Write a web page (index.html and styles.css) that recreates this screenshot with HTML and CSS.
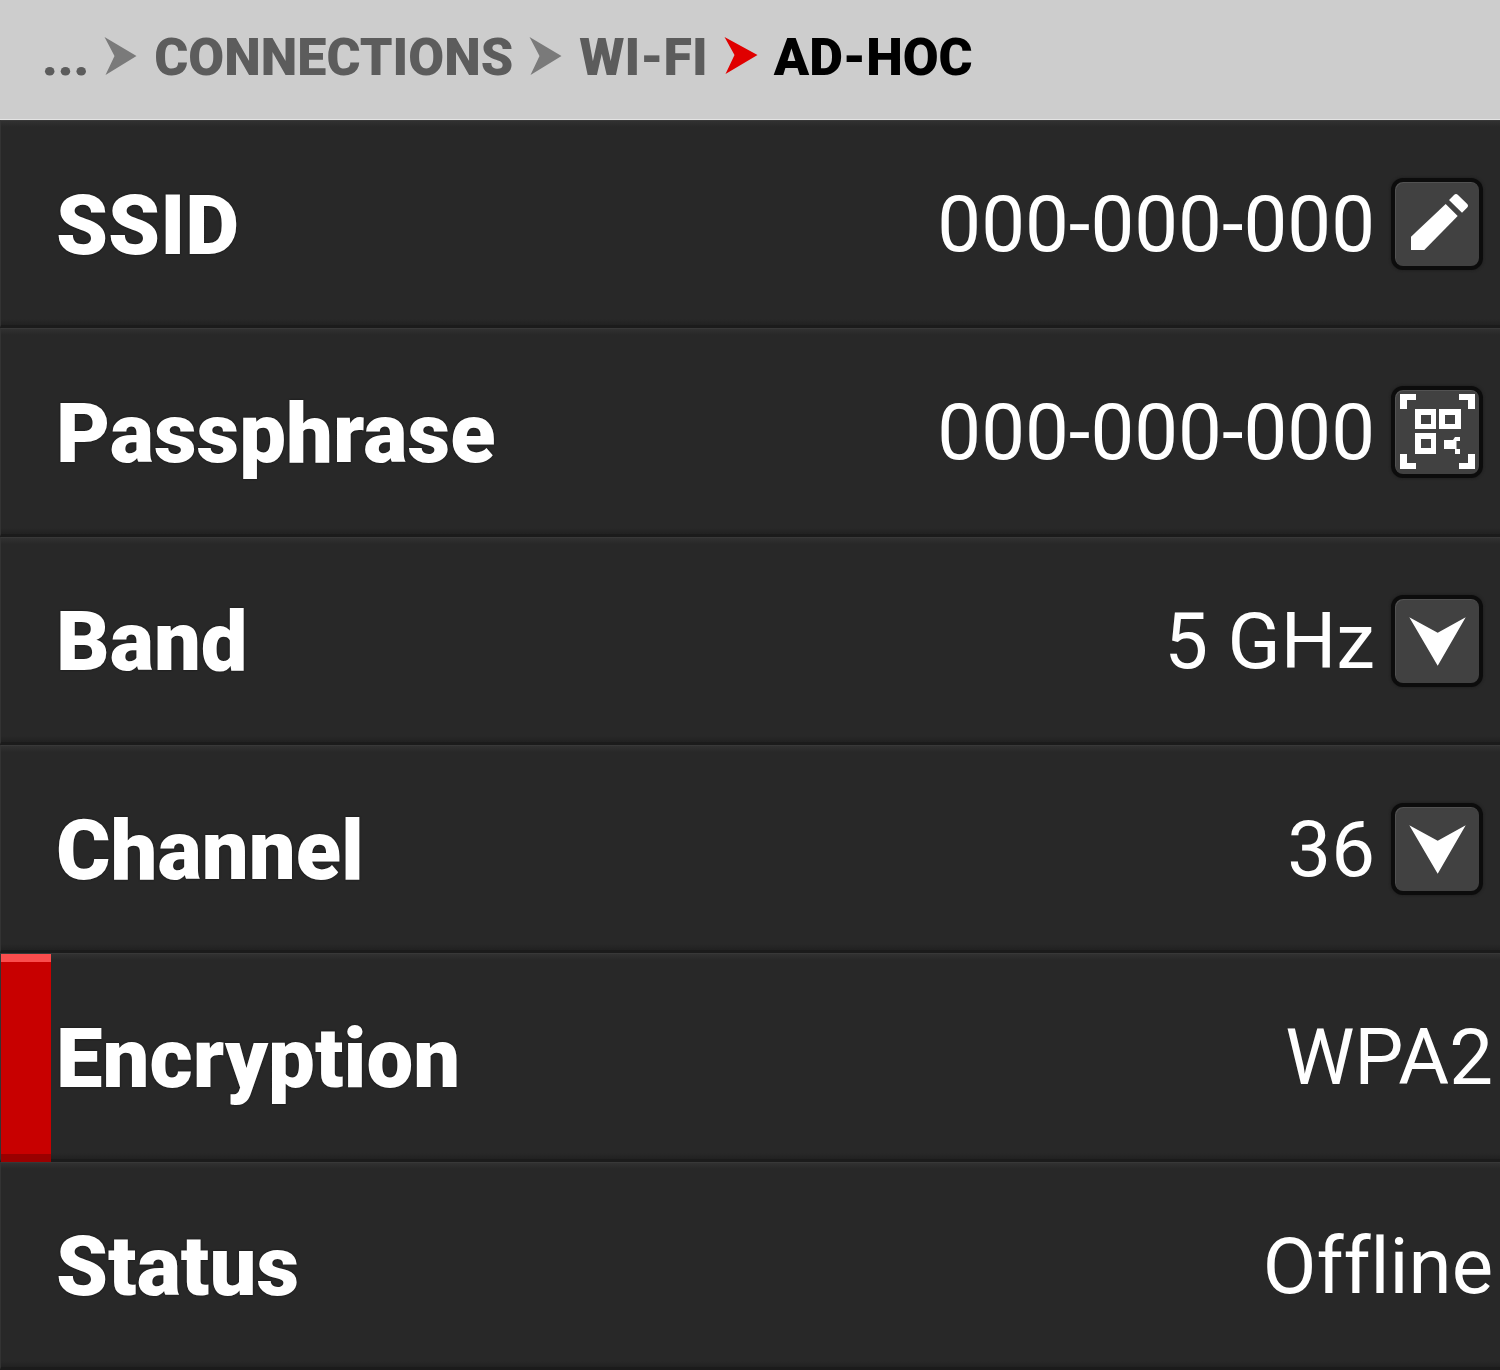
FILE: index.html
```html
<!DOCTYPE html>
<html lang="en">
<head>
<meta charset="utf-8">
<title>Ad-Hoc</title>
<link rel="stylesheet" href="styles.css">
</head>
<body>
<div class="app">
  <nav class="crumbs">
    <span class="crumb">...</span>
    <svg class="sep" viewBox="0 0 32 38"><path class="sep-gray" d="M0 0L32 19L1 38L10 19Z"/></svg>
    <span class="crumb">CONNECTIONS</span>
    <svg class="sep" viewBox="0 0 32 38"><path class="sep-gray" d="M0 0L32 19L1 38L10 19Z"/></svg>
    <span class="crumb">WI-FI</span>
    <svg class="sep" viewBox="0 0 32 38"><path class="sep-red" d="M0 0L33 18L1 37L10 18Z"/></svg>
    <span class="crumb current">AD-HOC</span>
  </nav>
  <main class="list">
    <div class="row">
      <span class="label">SSID</span>
      <span class="value">000-000-000</span>
      <button class="btn"><svg class="icon" viewBox="0 0 92 92"><path d="M20 72V58.7L54.7 26L66.7 38L33.3 72Z"/><path d="M58 22L63 17Q65 15 67 17L76 25.700Q78 27.700 76 29.700L71 34.700Z"/></svg></button>
    </div>
    <div class="row">
      <span class="label">Passphrase</span>
      <span class="value">000-000-000</span>
      <button class="btn"><svg class="icon" viewBox="0 0 92 92"><path d="M9 8H25V14H16V23H9ZM84 8H68V14H77V23H84ZM9 83H25V77H16V68H9ZM84 83H68V77H77V68H84Z"/><path fill-rule="evenodd" d="M24 23H45V43H24ZM30 29V38H40V29ZM48 23H70V43H48ZM54 29V38H64V29ZM24 47H45V68H24ZM30 53V62H40V53Z"/><path d="M53 54H62L64 51H69V55H65.500V63H69V68H64V63H53Z"/></svg></button>
    </div>
    <div class="row">
      <span class="label">Band</span>
      <span class="value">5 GHz</span>
      <button class="btn"><svg class="icon" viewBox="0 0 92 92"><path d="M18.300 22.300L46.700 37.700L74.700 22.300L46.700 70.700Z"/></svg></button>
    </div>
    <div class="row">
      <span class="label">Channel</span>
      <span class="value">36</span>
      <button class="btn"><svg class="icon" viewBox="0 0 92 92"><path d="M18.300 22.300L46.700 37.700L74.700 22.300L46.700 70.700Z"/></svg></button>
    </div>
    <div class="row selected">
      <span class="marker"></span>
      <span class="label">Encryption</span>
      <span class="value">WPA2</span>
    </div>
    <div class="row">
      <span class="label">Status</span>
      <span class="value">Offline</span>
    </div>
  </main>
</div>
</body>
</html>
```
FILE: styles.css
```css
* { box-sizing: border-box; }
html, body { margin: 0; padding: 0; background: #282828; }
.app { width: 1500px; height: 1370px; display: flex; flex-direction: column; font-family: Roboto, sans-serif; font-variant-ligatures: none; overflow: hidden; }
.crumbs { height: 120px; flex: none; background: #cdcdcd; border-bottom: 1px solid #e4e4e4; display: flex; align-items: center; padding: 0 0 4px 42px; }
.crumb { font-size: 52px; line-height: 1; font-weight: 900; color: #5c5c5c; }
.crumb:first-child { margin-right: -1px; }
.crumb.current { color: #000; }
.sep { width: 33px; height: 38px; flex: none; margin: 0 17px 3px 16px; overflow: visible; }
.sep-gray { fill: #7a7a7a; }
.sep-red { fill: #e00000; }
.list { flex: 1; display: flex; flex-direction: column; }
.row { position: relative; flex: 1; display: flex; align-items: center; padding: 2px 7px 0 58px; background: linear-gradient(#313131, #282828 6px, #282828 calc(100% - 6px), #212121); border-top: 1px solid #383838; border-bottom: 3px solid #1b1b1b; border-left: 1px solid #333; }
.label { font-size: 83.2px; font-weight: 900; color: #fff; flex: 1; line-height: 1; text-shadow: 0 0 2px #111; margin: 2px 0 0 -3px; }
.value { font-size: 78px; font-weight: 400; color: #fff; line-height: 1; margin-top: 2px; }
.btn { width: 92px; height: 92px; flex: none; margin: 0 10px 0 16px; padding: 0; background: #414141; border: 4px solid #0c0c0c; border-radius: 12px; position: relative; box-shadow: 0 0 3px #1a1a1a, inset 1px 1px 0 #525252; }
.icon { position: absolute; left: -4px; top: -4px; width: 92px; height: 92px; fill: #fff; display: block; }
.marker { position: absolute; left: 0; top: 0; bottom: -3px; width: 50px; background: #c80000; border-top: 8px solid #fa4d4d; border-bottom: 8px solid #9a0000; }
```
